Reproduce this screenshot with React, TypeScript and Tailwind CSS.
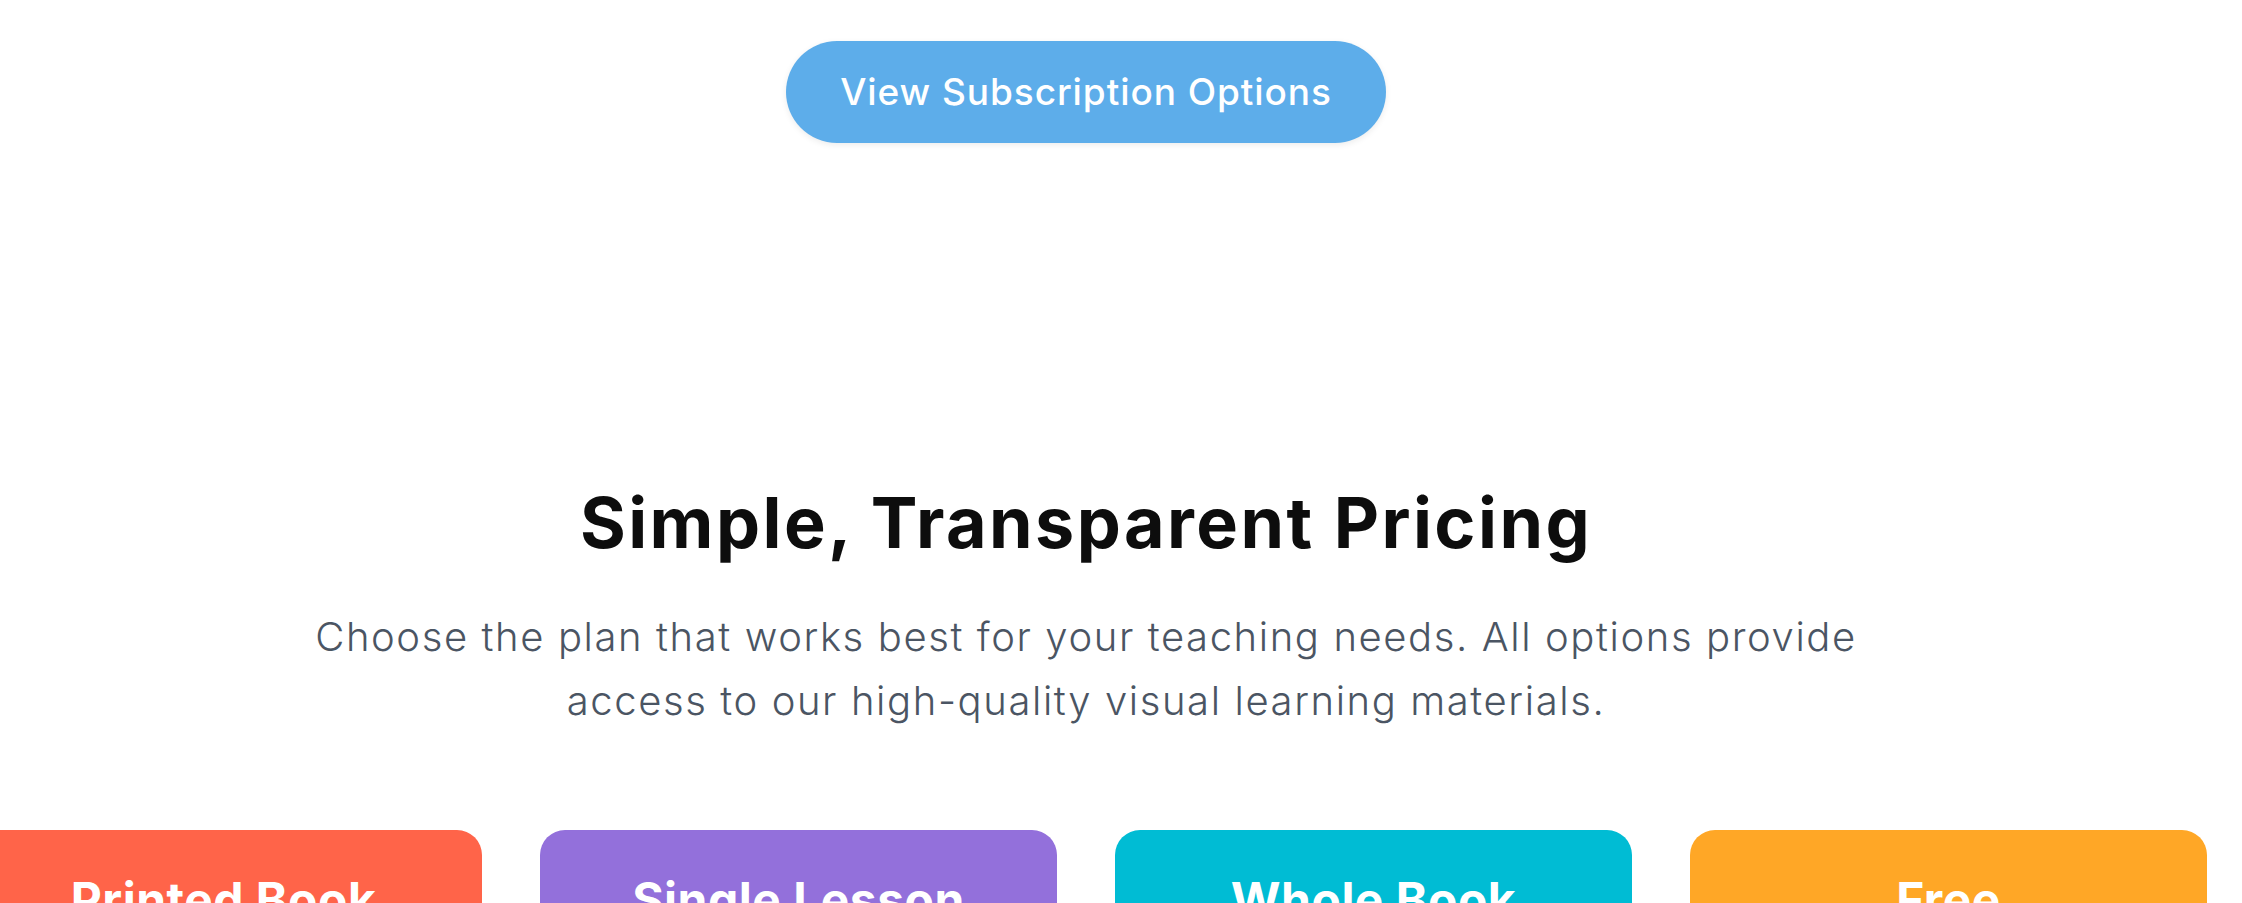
import React from 'react';

const plans = [
  { name: 'Printed Book', color: 'bg-[#ff6449]' },
  { name: 'Single Lesson', color: 'bg-[#9370db]' },
  { name: 'Whole Book', color: 'bg-[#00bcd4]' },
  { name: 'Free', color: 'bg-[#ffa726]' },
];

export default function App() {
  return (
    <div className="min-h-screen w-full overflow-hidden bg-white font-['Inter',sans-serif] pr-[70px]">
      {/* CTA */}
      <div className="flex justify-center pt-[41px]">
        <button className="h-[102px] w-[600px] rounded-full bg-[#5dadea] text-[37px] font-medium tracking-[0.025em] text-white shadow-[0_2px_6px_rgba(0,0,0,0.08)]">
          View Subscription Options
        </button>
      </div>

      {/* Pricing */}
      <section className="mt-[338px] flex flex-col items-center">
        <h2 className="text-[70px] leading-[84px] font-bold tracking-[0.035em] text-[#0d0d0d]">
          Simple, Transparent Pricing
        </h2>
        <p className="mt-[40px] max-w-[1600px] text-center text-[40px] leading-[64px] font-light tracking-[0.04em] text-[#4b5563]">
          Choose the plan that works best for your teaching needs. All options provide access to our high-quality visual learning materials.
        </p>

        <div className="mt-[97px] flex justify-center gap-[58px]">
          {plans.map((plan) => (
            <div
              key={plan.name}
              className={`${plan.color} h-[400px] w-[517px] shrink-0 rounded-[25px] pt-[41px] text-center`}
            >
              <h3 className="text-[48px] leading-[58px] font-bold tracking-[0.01em] text-white">{plan.name}</h3>
            </div>
          ))}
        </div>
      </section>
    </div>
  );
}
